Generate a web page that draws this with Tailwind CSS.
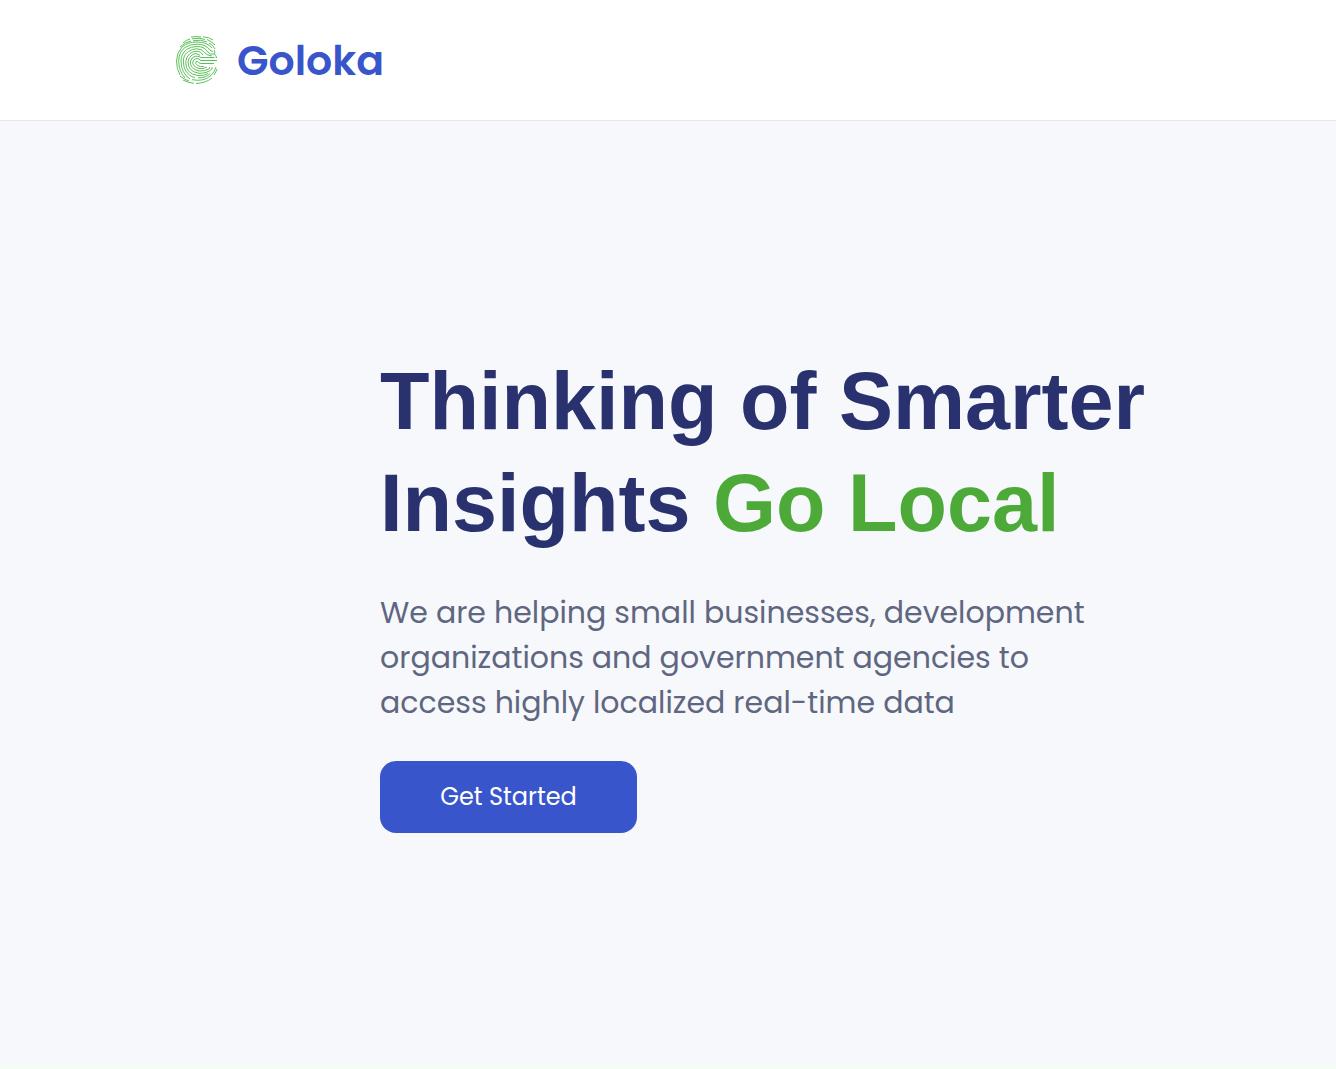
<!DOCTYPE html>
<html lang="en">
<head>
<meta charset="utf-8">
<meta name="viewport" content="width=device-width, initial-scale=1">
<title>Goloka</title>
<script src="https://cdn.jsdelivr.net/npm/@tailwindcss/browser@4"></script>
</head>
<body class="flex min-h-screen flex-col bg-[#f7f8fc] font-[Poppins,Inter,sans-serif]">
<header class="flex h-[121px] items-center border-b border-[#e6e7ea] bg-white px-6 md:px-44">
  <a href="#" class="flex items-center gap-[19px] text-[#3955cb]">
    <svg class="h-12 w-[42px]" viewBox="0 0 42 48" fill="none" stroke="#5cc05a" stroke-width="1" aria-hidden="true">
      <path d="M15 1Q20 .3 25 1M27 .8Q33 1 37 4M7 7Q10 4 14 3M16 2.800Q24 1.500 29 3.500M31 3.500Q35 5 39 9M4 11Q9 6 15 5M17 4.800Q25 3 31 6M33 7Q37 9 39 13"/>
      <path d="M4 39Q.5 33 .5 25Q.5 17 6 11Q12 6 21 6Q31 6 36 12M38 14Q40 16 38 18"/>
      <path d="M9 42Q2.700 35 2.700 25Q2.700 16 9 11.500Q14 8.200 21 8.200Q29 8.200 33 13Q35 15.500 37 15.500"/>
      <path d="M14 43Q5 37 5 25Q5 18 10.500 13.500Q15 10.500 21 10.500Q28 10.500 31 15Q34 19.500 38 18Q40.500 19 40.500 22"/>
      <path d="M19 42Q7.300 38 7.300 25Q7.500 18.500 12.500 15.500Q16 12.800 21 12.800Q26 12.800 29 17Q31 19.500 36 20"/>
      <path d="M32 37.500Q28 40 22 39.500Q9.700 38 9.700 26Q10 20.500 14 17.500Q17 15.200 21 15.200Q25 15.200 27 19"/>
      <path d="M36 31V33Q31 37.500 23 37.300Q12 35.500 12 26Q12.500 21 16 19Q20 16 24 19.500"/>
      <path d="M33.500 31V32.500Q29 35.500 23 35Q14.300 33 14.300 26Q15 21.500 19 20.300Q22 19.500 25 21.500H38.500"/>
      <path d="M31 31Q27 33.500 23 32.500Q16.700 31 16.700 26Q17.500 22.500 21 22.500Q22.500 22.500 25 24.500H41"/>
      <path d="M28 30.500Q24 31 21.500 29.500Q18.500 27 20 25.500Q21 24.500 24 27.500H38"/>
      <path d="M4 40Q9 44 13 45M16 43.700Q28 46 35 39.500Q38.500 36 40 31M22 41.800Q30 42 34 37.500M7 44Q12 47 18 47.300M20 47.500Q30 47 36 42M38 39Q40 36 41 33"/>
    </svg>
    <span class="pt-0.5 text-[41px] leading-[48px] font-semibold">Goloka</span>
  </a>
</header>
<main class="flex grow items-center px-6 md:pr-20 md:pl-[380px]">
  <section class="w-full max-w-[800px] pt-16 pb-[66px]">
    <h1 class="font-['Liberation_Sans',Arial,sans-serif] text-[81px] leading-[102px] font-bold text-[#29326f]">Thinking of Smarter Insights <span class="text-[#4eaa38]">Go Local</span></h1>
    <p class="mt-9 max-w-[730px] text-[30px] leading-[45px] text-[#5f6780]">We are helping small businesses, development organizations and government agencies to access highly localized real-time data</p>
    <button type="button" class="mt-9 h-[72px] w-[257px] rounded-2xl bg-[#3955cb] text-2xl text-white">Get Started</button>
  </section>
</main>
<div class="h-1.5 bg-[#f5fcf6]"></div>
</body>
</html>
